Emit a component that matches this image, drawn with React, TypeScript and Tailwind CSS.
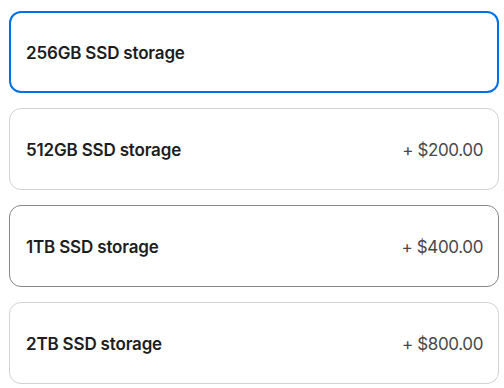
const options = [
  { label: '256GB SSD storage', price: null, state: 'selected' },
  { label: '512GB SSD storage', price: '+ $200.00', state: 'idle' },
  { label: '1TB SSD storage', price: '+ $400.00', state: 'hover' },
  { label: '2TB SSD storage', price: '+ $800.00', state: 'idle' },
];

export default function App() {
  return (
    <div className="w-[504px] h-[388px] bg-white pl-[9px] pt-[11px] flex flex-col gap-[15px] font-['Inter',sans-serif] text-[#1d1d1f]">
      {options.map((o) => (
        <div
          key={o.label}
          className={`w-[490px] h-[82px] shrink-0 rounded-[12px] pt-[3px] flex items-center justify-between ${
            o.state === 'selected'
              ? 'border-2 border-[#0071e3] pl-[15px] pr-[14px]'
              : o.state === 'hover'
              ? 'border border-[#86868b] pl-[16px] pr-[15px]'
              : 'border border-[#d2d2d7] pl-[16px] pr-[15px]'
          }`}
        >
          <span className="text-[17px] font-semibold tracking-[-0.01em]">{o.label}</span>
          {o.price && (
            <span className="text-[17px] tracking-[-0.022em] text-[#48484a]">{o.price}</span>
          )}
        </div>
      ))}
    </div>
  );
}
